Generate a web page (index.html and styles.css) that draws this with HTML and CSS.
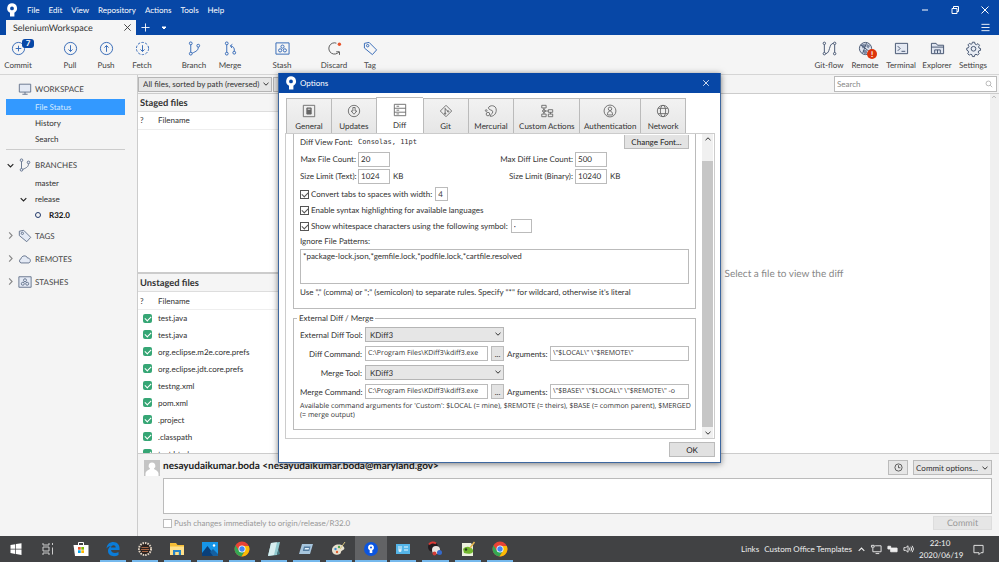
FILE: index.html
```html
<!DOCTYPE html>
<html lang="en">
<head>
<meta charset="utf-8">
<title>SeleniumWorkspace</title>
<link rel="stylesheet" href="styles.css">
</head>
<body>
<svg class="defs" aria-hidden="true">
  <symbol id="chev" viewBox="0 0 8 8"><path d="M1.5 2.8 4 5.2 6.5 2.8"/></symbol>
  <symbol id="chev-up" viewBox="0 0 8 8"><path d="M1.5 5.2 4 2.8 6.5 5.2"/></symbol>
  <symbol id="chev-right" viewBox="0 0 8 8"><path d="M2.8 1.3 5.4 4 2.8 6.7"/></symbol>
  <symbol id="close" viewBox="0 0 10 10"><path d="M1.5 1.5 8.5 8.5M8.5 1.5 1.5 8.5"/></symbol>
  <symbol id="logo" viewBox="0 0 12 14"><path fill="#fff" stroke="none" fill-rule="evenodd" d="M6 .3a5 5 0 0 1 2.4 9.4v3.8H4v-3.7A5 5 0 0 1 6 .3zM6 3.5a1.9 1.9 0 1 0 0 3.8 1.9 1.9 0 0 0 0-3.8z"/></symbol>
  <symbol id="branch" viewBox="0 0 16 16"><circle cx="4" cy="2.5" r="1.5"/><circle cx="4" cy="13.5" r="1.5"/><circle cx="12" cy="5" r="1.5"/><path fill="none" d="M4 4v8M12 6.500C12 10 10 11 5.500 13"/></symbol>
  <symbol id="tag" viewBox="0 0 16 16"><path d="M1.500 2.500 6.500 1.500 14.500 9.500 10 14.500 1.500 7.500z"/><circle cx="5" cy="5" r="1.300"/></symbol>
  <symbol id="stash" viewBox="0 0 16 16"><path d="M1 2h14v12H1z"/><circle cx="8" cy="6" r="1.700"/><circle cx="5.500" cy="10" r="1.700"/><circle cx="10.500" cy="10" r="1.700"/></symbol>
  <symbol id="chrome" viewBox="0 0 16 16"><g stroke="none"><circle cx="8" cy="8" r="7.500" fill="#e94335"/><path fill="#34a853" d="M1.500 4.300A7.500 7.500 0 0 0 7.500 15.500L11 9.800H5z"/><path fill="#fbbc05" d="M14.800 5H8l3.200 4.700-3.700 5.800A7.500 7.500 0 0 0 14.800 5z"/><circle cx="8" cy="8" r="3.500" fill="#fff"/><circle cx="8" cy="8" r="2.700" fill="#4285f4"/></g></symbol>
</svg>

<div class="app">
  <header class="titlebar">
    <nav class="menu">
      <svg class="logo"><use href="#logo"/></svg>
      <button>File</button><button>Edit</button><button>View</button><button>Repository</button><button>Actions</button><button>Tools</button><button>Help</button>
      <span class="window-buttons">
        <button aria-label="Minimize"><svg viewBox="0 0 10 10"><path d="M2 5h6"/></svg></button>
        <button aria-label="Restore"><svg viewBox="0 0 10 10"><path d="M2 3.500h5v5H2zM3.500 3.500v-2h5v5H7"/></svg></button>
        <button aria-label="Close"><svg><use href="#close"/></svg></button>
      </span>
    </nav>
    <div class="repo-tabs">
      <div class="repo-tab"><span>SeleniumWorkspace</span><button aria-label="Close tab"><svg><use href="#close"/></svg></button></div>
      <button class="tab-add" aria-label="New tab"><svg viewBox="0 0 10 10"><path d="M5 .5v9M.5 5h9"/></svg></button>
      <button class="tab-more" aria-label="Tab list"><svg viewBox="0 0 10 10"><path d="M3 4h4L5 6z"/></svg></button>
      <button class="burger" aria-label="Menu"><svg viewBox="0 0 10 10"><path d="M.5 1.500h9M.5 5h9M.5 8.500h9"/></svg></button>
    </div>
  </header>

  <div class="toolbar">
    <button class="tool"><svg viewBox="0 0 16 16"><circle cx="8" cy="8" r="6.500"/><path d="M8 5v6M5 8h6"/></svg><span>Commit</span><b class="count">7</b></button>
    <i></i>
    <button class="tool"><svg viewBox="0 0 16 16"><circle cx="8" cy="8" r="6.500"/><path d="M8 4.500v6.500M5.800 9 8 11.200 10.200 9"/></svg><span>Pull</span></button>
    <button class="tool"><svg viewBox="0 0 16 16"><circle cx="8" cy="8" r="6.500"/><path d="M8 11.500V5M5.800 7 8 4.800 10.200 7"/></svg><span>Push</span></button>
    <button class="tool"><svg viewBox="0 0 16 16"><circle cx="8" cy="8" r="6.500" stroke-dasharray="2.600 1.500"/><path d="M8 4.500v6.500M5.800 9 8 11.200 10.200 9"/></svg><span>Fetch</span></button>
    <i></i>
    <button class="tool"><svg><use href="#branch"/></svg><span>Branch</span></button>
    <button class="tool"><svg viewBox="0 0 16 16"><circle cx="4" cy="2.500" r="1.500"/><circle cx="4" cy="13.500" r="1.500"/><circle cx="12" cy="12.500" r="1.500"/><path d="M4 4v8M12 11C12.500 7 11 6 8 5M10 3.500 8 5l1.500 2.500"/></svg><span>Merge</span></button>
    <i></i>
    <button class="tool"><svg><use href="#stash"/></svg><span>Stash</span></button>
    <i></i>
    <button class="tool grey"><svg viewBox="0 0 16 16"><path d="M10 2.300A6 6 0 1 0 12.800 11.500M9.800 11.500h3.500v3.300"/><circle cx="13.200" cy="3.500" r="1.800" fill="#e8532b" stroke="none"/></svg><span>Discard</span></button>
    <button class="tool"><svg><use href="#tag"/></svg><span>Tag</span></button>
    <span class="spacer"></span>
    <button class="tool slate"><svg viewBox="0 0 16 16"><circle cx="2.500" cy="2.500" r="1.300"/><circle cx="2.500" cy="13.500" r="1.300"/><circle cx="13.500" cy="2.500" r="1.300"/><circle cx="13.500" cy="13.500" r="1.300"/><path d="M2.500 4v8M13.500 4v8M4 13.500c5-.5 3-10.500 8-11"/></svg><span>Git-flow</span></button>
    <button class="tool slate"><svg viewBox="0 0 16 16"><circle cx="8" cy="8" r="6.500" fill="#dfe5f0"/><path fill="#7d8ba5" stroke="none" d="M3 4l4-1 1 3-3 2zM9 3l4 2-2 3-2-2zM5 10l4-1 1 4-3 1z"/><path d="M3 4l10 8M9 2 5 13"/></svg><span>Remote</span><b class="alert">!</b></button>
    <button class="tool slate"><svg viewBox="0 0 16 16"><path fill="#e3e8f2" d="M1.500 2.500h13v11h-13z"/><path d="M4 5.500 6.500 8 4 10.500M8 11h4"/></svg><span>Terminal</span></button>
    <button class="tool slate"><svg viewBox="0 0 16 16"><path fill="#dfe5f0" d="M1.500 13.500v-11h5l1.500 2h6.500v9z"/><path d="M1.500 6.500h13M5 13V9.500h6V13M8 9.500V13"/></svg><span>Explorer</span></button>
    <button class="tool slate"><svg viewBox="0 0 16 16"><path fill="#e9edf4" d="M6.800 1.300h2.400l.4 1.900 1.500.7 1.700-1.100 1.600 1.700-1 1.700.5 1.400 1.600.4v2l-1.900.5-.6 1.300 1 1.700-1.600 1.600-1.700-1-1.300.6-.4 1.900H6.800l-.4-1.900-1.300-.6-1.700 1-1.600-1.600 1-1.700-.6-1.300L.8 9.700V7.600l1.700-.4.6-1.400-1-1.700 1.600-1.600 1.700 1 1.100-.6z"/><circle cx="8" cy="8.300" r="2.500"/></svg><span>Settings</span></button>
  </div>

  <div class="workspace">
    <aside class="sidebar">
      <h2><svg class="ico" viewBox="0 0 16 16"><path d="M1.500 2.500h13v9h-13zM5 14h6M8 11.500V14"/></svg>WORKSPACE</h2>
      <a class="item selected" href="#">File Status</a>
      <a class="item" href="#">History</a>
      <a class="item" href="#">Search</a>
      <hr>
      <h2><svg class="arrow dark"><use href="#chev"/></svg><svg class="ico"><use href="#branch"/></svg>BRANCHES</h2>
      <a class="item" href="#">master</a>
      <a class="item folder" href="#"><svg class="arrow dark"><use href="#chev"/></svg>release</a>
      <a class="item current" href="#"><span class="ring"></span>R32.0</a>
      <div class="sections">
        <h2><svg class="arrow"><use href="#chev-right"/></svg><svg class="ico"><use href="#tag"/></svg>TAGS</h2>
        <h2><svg class="arrow"><use href="#chev-right"/></svg><svg class="ico" viewBox="0 0 16 16"><path d="M3.500 12.500a2.500 2.500 0 0 1 0-4.800C4 4 9.500 3 11 7c3-.5 4.500 4 1.500 5.500z"/></svg>REMOTES</h2>
        <h2><svg class="arrow"><use href="#chev-right"/></svg><svg class="ico"><use href="#stash"/></svg>STASHES</h2>
      </div>
    </aside>

    <main class="main">
      <div class="filterbar">
        <span class="select sort"><select aria-label="File filter"><option>All files, sorted by path (reversed)</option></select><svg><use href="#chev"/></svg></span>
        <span class="select view"><select aria-label="View"><option></option></select></span>
        <label class="search"><input type="search" placeholder="Search" aria-label="Search"><svg viewBox="0 0 10 10"><circle cx="4.300" cy="4.300" r="3"/><path d="M6.500 6.500 9 9"/></svg></label>
      </div>
      <div class="panes">
        <div class="files">
          <section class="staged">
            <h3>Staged files</h3>
            <table><thead><tr><th>?</th><th>Filename</th></tr></thead></table>
          </section>
          <section class="unstaged">
            <h3>Unstaged files</h3>
            <table>
              <thead><tr><th>?</th><th>Filename</th></tr></thead>
              <tbody>
                <tr><td><input type="checkbox" id="f1" checked></td><td><label for="f1">test.java</label></td></tr>
                <tr><td><input type="checkbox" id="f2" checked></td><td><label for="f2">test.java</label></td></tr>
                <tr><td><input type="checkbox" id="f3" checked></td><td><label for="f3">org.eclipse.m2e.core.prefs</label></td></tr>
                <tr><td><input type="checkbox" id="f4" checked></td><td><label for="f4">org.eclipse.jdt.core.prefs</label></td></tr>
                <tr><td><input type="checkbox" id="f5" checked></td><td><label for="f5">testng.xml</label></td></tr>
                <tr><td><input type="checkbox" id="f6" checked></td><td><label for="f6">pom.xml</label></td></tr>
                <tr><td><input type="checkbox" id="f7" checked></td><td><label for="f7">.project</label></td></tr>
                <tr><td><input type="checkbox" id="f8" checked></td><td><label for="f8">.classpath</label></td></tr>
                <tr><td><input type="checkbox" id="f9" checked></td><td><label for="f9">test.html</label></td></tr>
              </tbody>
            </table>
          </section>
        </div>
        <section class="diff"><p>Select a file to view the diff</p></section>
        <div class="gutter"><svg><use href="#chev-up"/></svg></div>
      </div>
      <form class="commit">
        <svg class="avatar" viewBox="0 0 16 16"><path fill="#c4c4c4" d="M0 0h16v16H0z"/><path fill="#fff" d="M8 2.500a3.300 3.300 0 0 1 2 6c0 1.500 4 1.500 4.500 5V16h-13v-2.500c.5-3.500 4.500-3.500 4.500-5a3.300 3.300 0 0 1 2-6z"/></svg>
        <div class="commit-body">
          <div class="commit-head">
            <strong>nesayudaikumar.boda &lt;nesayudaikumar.boda@maryland.gov&gt;</strong>
            <button type="button" class="clock" aria-label="Recent messages"><svg viewBox="0 0 12 12"><circle cx="6" cy="6" r="4.800"/><path d="M6 3v3.300h2.500"/></svg></button>
            <button type="button" class="options">Commit options...<svg><use href="#chev"/></svg></button>
          </div>
          <textarea aria-label="Commit message"></textarea>
          <div class="commit-foot">
            <label><input type="checkbox" disabled> Push changes immediately to origin/release/R32.0</label>
            <button type="button" disabled>Commit</button>
          </div>
        </div>
      </form>
    </main>
  </div>

  <div class="overlay">
    <div class="dialog" role="dialog" aria-label="Options">
      <header><svg class="logo"><use href="#logo"/></svg><span>Options</span><button aria-label="Close"><svg><use href="#close"/></svg></button></header>
      <div class="dialog-body">
        <div class="tabs" role="tablist">
          <button role="tab"><svg viewBox="0 0 16 16"><path d="M1.500 1.500h13v13h-13z"/><path fill="#666" d="M5.500 4.500h5v7h-5z"/><path stroke="#eee" d="M6.500 6h3"/></svg>General</button>
          <button role="tab"><svg viewBox="0 0 16 16"><circle cx="8" cy="8" r="6.500"/><path d="M6.700 4h2.600v4h2L8 11.700 4.700 8h2z"/></svg>Updates</button>
          <button role="tab" aria-selected="true"><svg viewBox="0 0 16 16"><path d="M1.500 1.500h13v13h-13zM1.500 6h13M1.500 10.500h13M4 3.700h3M4 8.200h3M4 12.500h3"/></svg>Diff</button>
          <button role="tab"><svg viewBox="0 0 16 16"><path d="M8 1.500 14.500 8 8 14.500 1.500 8zM7 4.500v7M7 5.500l3.500 3"/><circle cx="7" cy="11" r=".8"/><circle cx="10.500" cy="8.500" r=".8"/></svg>Git</button>
          <button role="tab"><svg viewBox="0 0 16 16"><path d="M5 4.500C6 1 14 .5 14 7c0 5-4 7.500-7 7 0-3 3-2 3-5 0-3-4-1-5-4.500z"/><circle cx="4.500" cy="11.500" r="2"/><circle cx="2.500" cy="7.500" r="1"/></svg>Mercurial</button>
          <button role="tab"><svg viewBox="0 0 16 16"><path d="M2 1.500h5v3H2zM9.500 6.500h5v3h-5zM2 11.500h5v3H2zM9.500 11.500h5v3h-5zM4.500 4.500v7M4.500 8h5M12 9.500v2M2.500 8 4.500 6l2 2-2 2z"/></svg>Custom Actions</button>
          <button role="tab"><svg viewBox="0 0 16 16"><circle cx="8" cy="8" r="6.800"/><circle cx="8" cy="5.500" r="2"/><path d="M5 12.500c0-6 6-6 6 0z"/></svg>Authentication</button>
          <button role="tab"><svg viewBox="0 0 16 16"><circle cx="8" cy="8" r="6.500"/><ellipse cx="8" cy="8" rx="3" ry="6.500"/><path d="M2.500 5h11M2.500 11h11"/></svg>Network</button>
        </div>
        <div class="panel">
          <div class="scroll-content">
            <fieldset class="group diff-group">
              <div class="grid limits">
                <span>Diff View Font:</span><code>Consolas, 11pt</code><button type="button" class="change">Change Font...</button>
                <label for="mfc">Max File Count:</label><span class="pair"><input id="mfc" value="20"></span>
                <label for="mdl">Max Diff Line Count:</label><span class="pair"><input id="mdl" value="500"></span>
                <label for="slt">Size Limit (Text):</label><span class="pair"><input id="slt" value="1024">KB</span>
                <label for="slb">Size Limit (Binary):</label><span class="pair"><input id="slb" value="10240">KB</span>
              </div>
              <div class="check"><label><input type="checkbox" checked>Convert tabs to spaces with width:</label><input class="tiny" aria-label="Tab width" value="4"></div>
              <div class="check"><label><input type="checkbox" checked>Enable syntax highlighting for available languages</label></div>
              <div class="check"><label><input type="checkbox" checked>Show whitespace characters using the following symbol:</label><input class="symbol" aria-label="Whitespace symbol" value="·"></div>
              <label class="caption" for="ignore">Ignore File Patterns:</label>
              <textarea id="ignore">*package-lock.json,*gemfile.lock,*podfile.lock,*cartfile.resolved</textarea>
              <p>Use "," (comma) or ";" (semicolon) to separate rules. Specify "*" for wildcard, otherwise it's literal</p>
            </fieldset>
            <fieldset class="group">
              <legend>External Diff / Merge</legend>
              <div class="grid tools">
                <label for="edt">External Diff Tool:</label><span class="select wide"><select id="edt"><option>KDiff3</option></select><svg><use href="#chev"/></svg></span>
                <label for="dc">Diff Command:</label><input id="dc" value="C:\Program Files\KDiff3\kdiff3.exe"><button type="button" aria-label="Browse diff command">...</button><label for="da">Arguments:</label><input id="da" value="\&quot;$LOCAL\&quot; \&quot;$REMOTE\&quot;">
                <label for="mt">Merge Tool:</label><span class="select wide"><select id="mt"><option>KDiff3</option></select><svg><use href="#chev"/></svg></span>
                <label for="mc">Merge Command:</label><input id="mc" value="C:\Program Files\KDiff3\kdiff3.exe"><button type="button" aria-label="Browse merge command">...</button><label for="ma">Arguments:</label><input id="ma" value="\&quot;$BASE\&quot; \&quot;$LOCAL\&quot; \&quot;$REMOTE\&quot; -o">
              </div>
              <p class="hint">Available command arguments for 'Custom': $LOCAL (= mine), $REMOTE (= theirs), $BASE (= common parent), $MERGED (= merge output)</p>
            </fieldset>
          </div>
          <div class="scrollbar"><svg><use href="#chev-up"/></svg><span></span><svg><use href="#chev"/></svg></div>
        </div>
        <div class="dialog-foot"><button type="button">OK</button></div>
      </div>
    </div>
  </div>
</div>

<footer class="taskbar">
  <div class="apps">
    <button aria-label="Start"><svg viewBox="0 0 16 16"><path fill="#fff" d="M2.500 4 7.300 3.200v4.500H2.500zM8 3.100l5.500-.9v5.500H8zM2.500 8.400h4.800v4.500L2.500 12zM8 8.400h5.500v5.500L8 13z"/></svg></button>
    <button aria-label="Task view"><svg viewBox="0 0 16 16"><path stroke="#ccc" d="M3 2v2h6V2M3 6h6v4H3zM3 14v-2h6v2M12.500 2v2M12.500 6.500v7"/></svg></button>
    <button aria-label="Store"><svg viewBox="0 0 16 16"><path stroke="#fff" d="M5.500 4V1.500h5V4"/><path fill="#fff" d="M.5 4h15v11H2z"/><path fill="#e8532b" d="M5 6h2.700v2.700H5z"/><path fill="#7fba00" d="M8.300 6H11v2.700H8.300z"/><path fill="#00a4ef" d="M5 9.300h2.700V12H5z"/><path fill="#ffb900" d="M8.300 9.300H11V12H8.300z"/></svg></button>
    <button class="run" aria-label="Edge"><svg viewBox="0 0 16 16"><path fill="#0b7cd8" fill-rule="evenodd" d="M1.500 7.500C2 3 5 1 8.300 1c4 0 6.200 3 6.200 6v2H6c.3 3.500 5 3.500 7.500 2v3C9 16.500 3 15 3 10c0-2.500 1.300-4 3-5C4 5 2.500 6 1.500 7.500zM6 6.500h4.700C10.700 3.500 6.500 3.500 6 6.500z"/></svg></button>
    <button class="run" aria-label="Eclipse"><svg viewBox="0 0 16 16"><circle cx="8" cy="8" r="6" fill="#292220" stroke="#e2d5c5" stroke-width="2" stroke-dasharray="1.500 1"/><path stroke="#a46443" d="M4.500 6.500h7M4 8.500h8M5 10.500h6"/></svg></button>
    <button class="run" aria-label="File Explorer"><svg viewBox="0 0 16 16"><path fill="#f5bd36" d="M1 2h6l1.500 2H15v9H1z"/><path fill="#ffe08a" d="M1 5.500h14V14H1z"/><path fill="#2683c6" d="M4 14V9h8v5h-2.200v-3H6.200v3z"/></svg></button>
    <button class="run" aria-label="Photos"><svg viewBox="0 0 16 16"><path fill="#1695e8" d="M0 1h16v14H0z"/><path fill="#0a3f79" d="M0 12 5.500 5 13 15H0z"/><path fill="#155f9f" d="m8 11 3-3 5 5v2H11z"/><circle cx="12" cy="4.500" r="1.200" fill="#fff"/></svg></button>
    <button class="run" aria-label="Chrome"><svg><use href="#chrome"/></svg></button>
    <button class="run" aria-label="Notes"><svg viewBox="0 0 16 16"><path fill="#91cbd0" d="m5 2 9-1-3 13-9 1z"/><path fill="#d7eff0" d="m5 2 6-.7L8 14l-6 1z"/><path fill="#467d86" d="m11 14 1.500-6L14 13z"/></svg></button>
    <button class="run" aria-label="Run"><svg viewBox="0 0 16 16"><path fill="#a7c6de" d="M4 3h11l-3 10H1z"/><path fill="#547da1" d="M6 5.500h6.500l-1.300 4.500H4.800z"/><path fill="#e4f2fc" d="M7 7h4l-.4 1.500H6.500z"/></svg></button>
    <button class="run" aria-label="Paint"><svg viewBox="0 0 16 16"><path fill="#e8e1cf" d="M1 9c0-5 7-7 11-4 4 4-2 4-2 6 0 4-9 4-9-2z"/><circle cx="4.500" cy="8" r="1.200" fill="#3d8fd1"/><circle cx="8" cy="6" r="1.200" fill="#4ba653"/><circle cx="6" cy="11" r="1.200" fill="#e06032"/><path stroke="#d6c37b" d="m9 8 5-7"/></svg></button>
    <button class="run active" aria-label="Sourcetree"><svg viewBox="0 0 16 16"><circle cx="8" cy="8" r="7" fill="#0c55df"/><path fill="#fff" fill-rule="evenodd" d="M8 3.500a3 3 0 0 1 1.300 5.700V12H6.700V9.200A3 3 0 0 1 8 3.500zM8 5.500a1 1 0 1 0 0 2 1 1 0 0 0 0-2z"/></svg></button>
    <button class="run" aria-label="Contacts"><svg viewBox="0 0 16 16"><path fill="#54b5e8" d="M1 3h14v10H1z"/><path stroke="#e8f7ff" d="M3 6h4M3 8h4M9 6h4M9 9h4"/><circle cx="5" cy="9.500" r="1.500" fill="#d9f0fb"/></svg></button>
    <button class="run" aria-label="Snip"><svg viewBox="0 0 16 16"><circle cx="6" cy="6" r="5" fill="#241b1f"/><path stroke="#dc3934" stroke-width="2" d="M2 3.500a5 5 0 0 1 7-1"/><circle cx="9" cy="9" r="4" fill="#e9e4e0"/><circle cx="12.500" cy="11.500" r="2.500" fill="#3469cb"/><circle cx="7.500" cy="12.500" r="2" fill="#d43d37"/></svg></button>
    <button class="run" aria-label="Notepad++"><svg viewBox="0 0 16 16"><path fill="#edf1de" d="M2 2h9l2 3v10H2z"/><path fill="#72b72f" d="M3 8c3-4 9-2 10 1s-3 5-9 3z"/><circle cx="6" cy="8.500" r="1.200" fill="#28421a"/><path stroke="#e5b650" stroke-width="1.500" d="m10 7 4.500-6"/></svg></button>
    <button class="run" aria-label="Chrome"><svg><use href="#chrome"/></svg></button>
  </div>
  <div class="tray">
    <a href="#">Links</a><a href="#">Custom Office Templates</a>
    <svg><use href="#chev-up"/></svg>
    <svg class="wide-ico" viewBox="0 0 12 10"><path d="M2 3.500V8h9V1.500H4.500M5 10h4M.5 1h3v2h-3z"/></svg>
    <svg class="wide-ico" viewBox="0 0 12 10"><path fill="#eee" d="M3 4h8v4H4V5zM1 2h3v3H1z"/></svg>
    <svg class="wide-ico" viewBox="0 0 12 10"><path d="M1 3.500h2l2.500-2v7L3 6.500H1zM7 3.500q1 1.500 0 3M8.500 2.500q2 2.500 0 5M10 1.500q3 3.500 0 7"/></svg>
    <time>22:10<br>2020/06/19</time>
    <svg class="note" viewBox="0 0 12 12"><path d="M1 1.500h10v8H8.500L6.500 11.500V9.500H1z"/></svg>
  </div>
</footer>
</body>
</html>
```
FILE: styles.css
```css
* { box-sizing: border-box; }

body {
  margin: 0;
  min-height: 100vh;
  display: grid;
  grid-template-rows: minmax(0, 1fr) 26px;
  font: 8px/12px Lato, "Open Sans", sans-serif;
  text-rendering: geometricPrecision;
  color: #333;
  background: #f4f4f4;
}

svg { display: block; fill: none; stroke: currentColor; overflow: visible; flex: none; }
button, input, select, textarea { font: inherit; color: inherit; margin: 0; border-radius: 0; text-rendering: inherit; }
button { padding: 0; border: 0; background: none; }
a { color: inherit; text-decoration: none; }
h2, h3, p { margin: 0; font-weight: normal; }
.defs { position: absolute; width: 0; height: 0; }

.app {
  position: relative;
  height: calc(100vh - 26px);
  display: grid;
  grid-template-rows: 35px 40px minmax(0, 1fr);
}

/* Title bar */
.titlebar { background: #0747a6; color: #fff; }
.menu { display: flex; align-items: center; height: 20px; padding-left: 6px; gap: 9px; }
.logo { width: 12px; height: 14px; }
.window-buttons { margin-left: auto; display: flex; gap: 20px; padding-right: 9px; }
.window-buttons svg { width: 10px; height: 10px; }
.repo-tabs { display: flex; align-items: center; height: 15px; padding-left: 6px; }
.repo-tab {
  width: 130px; height: 15px; padding: 0 4px 0 7px;
  display: flex; align-items: center; justify-content: space-between;
  background: #f5f5f5; color: #333; font-size: 9px;
}
.repo-tab svg { width: 9px; height: 9px; }
.tab-add { margin-left: 5px; }
.tab-add svg { width: 9px; height: 9px; }
.tab-more { margin-left: 9px; }
.tab-more svg { width: 10px; height: 10px; fill: #fff; }
.burger { margin-left: auto; margin-right: 9px; }
.burger svg { width: 9px; height: 9px; }

/* Toolbar */
.toolbar { display: flex; padding: 0 8px 0 0; border-bottom: 1px solid #d5d5d5; background: #f5f5f5; }
.toolbar i { width: 16px; }
.spacer { flex: 1; }
.tool {
  position: relative; width: 36px; padding-top: 6px;
  display: flex; flex-direction: column; align-items: center; gap: 3px;
  color: #444; white-space: nowrap;
}
.tool svg { width: 15px; height: 15px; color: #3166b5; }
.tool.grey svg { color: #555; }
.tool.slate svg { color: #42526e; }
.count {
  position: absolute; left: 22px; top: 4px; width: 12px; height: 9px;
  border-radius: 3px; background: #0747a6; color: #fff; line-height: 9px;
}
.alert {
  position: absolute; left: 20px; top: 14px; width: 10px; height: 10px;
  border-radius: 5px; background: #de350b; color: #fff; line-height: 10px;
}

/* Sidebar */
.workspace { display: grid; grid-template-columns: 137px minmax(0, 1fr); min-height: 0; }
.sidebar { padding: 4px 12px 0 6px; }
.sidebar h2 {
  position: relative; display: flex; align-items: center; gap: 3px; height: 20px;
  padding-left: 12px; font-size: 8px; color: #444;
}
.sidebar .ico { width: 14px; height: 14px; color: #5b6b86; fill: #e4eaf5; }
.sidebar .arrow { position: absolute; left: 0; width: 9px; height: 9px; color: #888; }
.sidebar .arrow.dark { color: #222; }
.item { position: relative; display: flex; align-items: center; height: 16px; padding-left: 29px; }
.item.selected { background: #3399ff; color: #d6ebff; }
.sidebar hr { margin: 2px 0 5px; border: 0; border-top: 1px solid #ccc; }
.item.folder .arrow { left: 13px; }
.item.current { gap: 8px; font-weight: bold; color: #111; }
.ring { width: 6px; height: 6px; border: 1px solid #223a6b; border-radius: 3px; }
.sections { padding-top: 1px; }
.sections h2 { height: 23px; }

/* Main area */
.main { display: grid; grid-template-rows: 19px minmax(0, 1fr) 83px; border-left: 1px solid #ccc; min-height: 0; }
.filterbar { display: flex; align-items: center; border-bottom: 1px solid #ccc; }
.select { position: relative; display: block; height: 15px; }
.select select { appearance: none; display: block; width: 100%; height: 100%; padding: 0 4px; border: 1px solid #b5b5b5; background: #e6e6e6; }
.select svg { position: absolute; right: 2px; top: 3px; width: 8px; height: 8px; }
.sort { width: 134px; }
.view { width: 90px; margin-left: 1px; }
.search { position: relative; margin-left: auto; margin-right: 2px; width: 163px; height: 16px; }
.search input { display: block; width: 100%; height: 100%; padding: 0 2px; border: 1px solid #bbb; background: #fff; }
.search input::placeholder { color: #888; }
.search svg { position: absolute; right: 4px; top: 4px; width: 8px; height: 8px; color: #aaa; }
.panes { display: grid; grid-template-columns: 440fr 412fr 9px; background: #fff; min-height: 0; }
.files { display: grid; grid-template-rows: 178fr 180fr; border-right: 1px solid #ccc; min-height: 0; }
.files section { overflow: hidden; min-height: 0; }
.files h3 { height: 18px; padding: 0 2px; line-height: 17px; font-weight: bold; background: #f5f5f5; border-bottom: 1px solid #ddd; }
.unstaged { border-top: 2px solid #ccc; }
.files table { width: 100%; border-collapse: collapse; table-layout: fixed; }
.files th { height: 17px; padding: 0 2px; text-align: left; font-weight: normal; border-bottom: 1px solid #eee; }
.files td { height: 17px; padding: 0 2px; }
.files th:first-child { width: 18px; }
.files td:first-child { padding-left: 5px; }
.files td input {
  appearance: none; display: grid; place-items: center; width: 9px; height: 9px;
  border-radius: 2px; background: #36a675;
}
input[type="checkbox"]:checked::after {
  content: ""; width: 5px; height: 3px; margin-top: -1px;
  border: solid #555; border-width: 0 0 1px 1px; transform: rotate(-45deg);
}
.files td input[type="checkbox"]:checked::after { border-color: #fff; }
.diff { display: grid; place-items: center; font-size: 10px; color: #888; }
.gutter { background: #f0f0f0; }
.gutter svg { width: 8px; height: 6px; color: #aaa; }

/* Commit form */
.commit { display: flex; gap: 3px; padding: 6px 7px 0 6px; border-top: 1px solid #ccc; background: #f4f4f4; }
.avatar { width: 16px; height: 16px; stroke: none; }
.commit-body { flex: 1; min-width: 0; }
.commit-head { display: flex; align-items: flex-start; height: 16px; gap: 5px; }
.commit-head strong { flex: 1; font-size: 10px; color: #222; }
.commit button { display: flex; align-items: center; justify-content: center; border: 1px solid #bbb; background: #e6e6e6; white-space: nowrap; }
.clock { width: 20px; height: 15px; }
.clock svg { width: 9px; height: 9px; }
.options { width: 79px; height: 15px; gap: 3px; }
.options svg { width: 8px; height: 8px; }
.commit textarea { display: block; width: 100%; height: 36px; margin-top: 2px; border: 1px solid #bbb; resize: none; background: #fff; }
.commit-foot { display: flex; justify-content: space-between; align-items: center; margin-top: 2px; color: #999; }
.commit-foot label { display: flex; align-items: center; gap: 2px; }
.commit-foot input { appearance: none; width: 9px; height: 9px; border: 1px solid #bbb; background: #fff; }
.commit .commit-foot button { width: 59px; height: 14px; font-size: 9px; border-color: #ddd; }

/* Options dialog */
.overlay { position: absolute; inset: 0; display: grid; place-items: center; }
.dialog {
  width: 443px; border: 1px solid #3d679f; border-top: 0; background: #fff;
  box-shadow: 0 1px 6px rgba(0, 0, 0, .5);
}
.dialog > header { display: flex; align-items: center; gap: 3px; height: 20px; padding: 0 10px 0 6px; background: #0747a6; color: #fff; }
.dialog > header button { margin-left: auto; }
.dialog > header button svg { width: 8px; height: 8px; }
.dialog-body { padding: 4px 5px 5px 6px; }
.tabs { display: grid; grid-template-columns: 45fr 45fr 47fr 45fr 46fr 66fr 61fr 46fr; align-items: end; padding: 0 29px 0 1px; }
.tabs button {
  height: 35px; padding-top: 4px; min-width: 0;
  display: flex; flex-direction: column; align-items: center; gap: 1px;
  border: 1px solid #bbb; border-bottom: 0; border-right: 0; background: linear-gradient(#f2f2f2, #e6e6e6); white-space: nowrap;
}
.tabs button:last-child { border-right: 1px solid #bbb; }
.tabs button[aria-selected] { height: 36px; background: #fff; }
.tabs svg { width: 14px; height: 14px; color: #666; margin: 1px 0; }
.panel { display: flex; justify-content: space-between; border: 1px solid #ccc; padding-right: 1px; }
.scroll-content { width: 403px; margin-left: 7px; padding-bottom: 8px; }
.group { margin: 0; padding: 0 6px; border: 1px solid #bbb; min-width: 0; }
.diff-group { border-top: 0; height: 175px; margin-bottom: 4px; }
.grid { display: grid; align-items: center; }
.limits { grid-template-columns: 56px 1fr auto 114px; grid-auto-rows: 16px; column-gap: 2px; row-gap: 1px; }
.limits > label { text-align: right; white-space: nowrap; }
.limits > span:first-child { white-space: nowrap; }
.limits code { font: 7px/12px "DejaVu Sans Mono", monospace; }
.group button { border: 1px solid #bbb; background: #e3e3e3; }
.limits .change { grid-column: 3 / 5; justify-self: end; width: 65px; height: 14px; border-top: 0; color: #222; }
.pair { display: flex; align-items: center; gap: 3px; }
.group input:not([type]), .group textarea { border: 1px solid #bbb; background: #fff; padding: 0 2px; }
.pair input { width: 32px; height: 15px; }
.check { display: flex; align-items: center; height: 16px; gap: 3px; }
.check label { display: flex; align-items: center; gap: 2px; }
.check input[type="checkbox"] { appearance: none; display: grid; place-items: center; width: 9px; height: 9px; border: 1px solid #555; }
.check .tiny { width: 13px; height: 14px; }
.check .symbol { width: 21px; height: 14px; }
.limits { margin-bottom: 2px; }
.caption { display: block; margin-top: 1px; }
.diff-group textarea { display: block; width: 100%; height: 35px; margin: 2px 0; resize: none; }
legend { padding: 0 2px; margin-left: -3px; line-height: 10px; }
.tools { grid-template-columns: 62px 123px 13px 40px 1fr; column-gap: 3px; row-gap: 4px; grid-auto-rows: 15px; padding-top: 4px; }
.tools label { text-align: right; white-space: nowrap; }
.tools .wide { grid-column: 2 / 4; }
.tools .wide + label { grid-column: 1; }
.tools input, .tools button { width: 100%; height: 15px; min-width: 0; }
.tools input, .hint { font-family: "Open Sans", Lato, sans-serif; font-size: 7px; }
.hint { margin: 3px -6px 9px 0; line-height: 9px; }
.scrollbar { width: 11px; display: flex; flex-direction: column; align-items: center; padding: 1px 0; background: #f0f0f0; }
.scrollbar svg { width: 8px; height: 8px; }
.scrollbar span { flex: 1; width: 100%; margin: 18px 0 2px; background: #c6c6c6; }
.dialog-foot { display: flex; justify-content: flex-end; margin-top: 3px; }
.dialog-foot button { width: 46px; height: 15px; border: 1px solid #bbb; background: #e1e1e1; color: #222; }

/* Taskbar */
.taskbar { display: flex; justify-content: space-between; background: #414244; color: #eee; }
.apps { flex: 0 1 516px; display: flex; }
.apps button { flex: 1; display: grid; place-items: center; position: relative; }
.apps svg { width: 16px; height: 16px; stroke: none; }
.apps path[stroke] { fill: none; }
.apps .run::after { content: ""; position: absolute; left: 3px; right: 3px; bottom: 0; height: 2px; background: #76b9ed; }
.apps .active { background: #626365; }
.apps .active::after { left: 0; right: 0; }
.tray { display: flex; align-items: center; gap: 5px; padding-right: 15px; }
.tray svg { width: 9px; height: 9px; }
.tray .wide-ico { width: 11px; height: 10px; }
.tray time { width: 42px; text-align: center; }
.tray .note { width: 11px; height: 11px; margin-left: 7px; }
```
